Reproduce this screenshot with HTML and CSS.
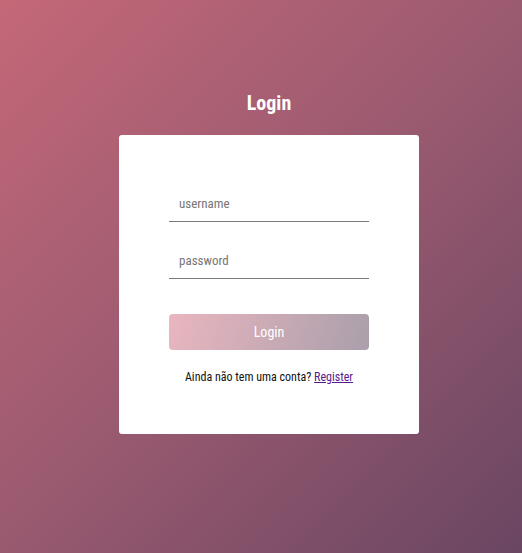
FILE: index.html
```html
<!DOCTYPE html>
<html>
<head>
<meta charset="utf-8">
<link rel="stylesheet" href="styles.css">
</head>
<body>
<main class="page">
  <h1 class="title">Login</h1>
  <form class="card">
    <input class="field" type="text" placeholder="username">
    <input class="field" type="password" placeholder="password">
    <button class="btn" type="button">Login</button>
    <p class="note">Ainda não tem uma conta? <a href="#" class="link">Register</a></p>
  </form>
</main>
</body>
</html>
```
FILE: styles.css
```css
* { box-sizing: border-box; }
html, body { margin: 0; height: 100%; }
body {
  font-family: "Roboto Condensed", Roboto, "Liberation Sans", sans-serif;
  background: linear-gradient(135deg, #c46878 0%, #9a5a70 50%, #6a4662 100%);
  min-height: 553px;
}
.page {
  display: flex;
  flex-direction: column;
  align-items: center;
  padding-top: 91px;
  padding-left: 16px;
}
.title {
  margin: 0 0 20px;
  color: #fff;
  font-size: 20px;
  font-weight: 700;
  line-height: 24px;
}
.card {
  width: 300px;
  height: 299px;
  background: #fff;
  border-radius: 3px;
  padding: 50px 50px 0;
  display: flex;
  flex-direction: column;
}
.field {
  width: 200px;
  height: 37px;
  border: none;
  border-bottom: 1px solid #7a7a7a;
  padding: 0 10px;
  font-family: inherit;
  font-size: 13px;
  color: #333;
  outline: none;
  margin-bottom: 20px;
}
.field::placeholder { color: #767676; }
.btn {
  margin-top: 15px;
  width: 200px;
  height: 36px;
  border: none;
  border-radius: 4px;
  background: linear-gradient(110deg, #eab6bf 0%, #a99fab 100%);
  color: #fff;
  font-family: inherit;
  font-size: 14px;
  font-weight: 400;
}
.note {
  margin: 20px 0 0;
  text-align: center;
  font-size: 12px;
  color: #111;
}
.link { color: #551a8b; }
```
